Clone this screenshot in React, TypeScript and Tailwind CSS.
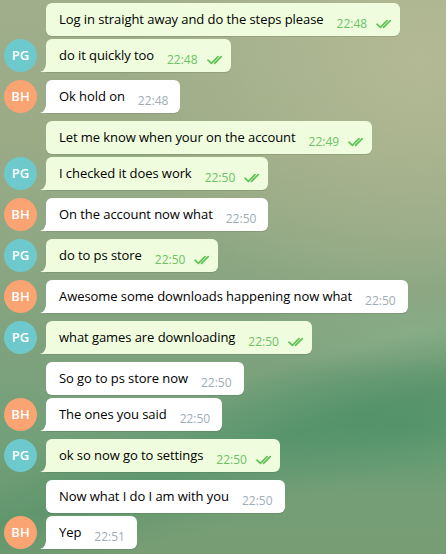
import React from "react";

type Msg = {
  text: string;
  time: string;
  out: boolean;
  who?: "PG" | "BH";
  last?: boolean;
};

const msgs: Msg[] = [
  { text: "Log in straight away and do the steps please", time: "22:48", out: true },
  { text: "do it quickly too", time: "22:48", out: true, who: "PG", last: true },
  { text: "Ok hold on", time: "22:48", out: false, who: "BH", last: true },
  { text: "Let me know when your on the account", time: "22:49", out: true },
  { text: "I checked it does work", time: "22:50", out: true, who: "PG", last: true },
  { text: "On the account now what", time: "22:50", out: false, who: "BH", last: true },
  { text: "do to ps store", time: "22:50", out: true, who: "PG", last: true },
  { text: "Awesome some downloads happening now what", time: "22:50", out: false, who: "BH", last: true },
  { text: "what games are downloading", time: "22:50", out: true, who: "PG", last: true },
  { text: "So go to ps store now", time: "22:50", out: false },
  { text: "The ones you said", time: "22:50", out: false, who: "BH", last: true },
  { text: "ok so now go to settings", time: "22:50", out: true, who: "PG", last: true },
  { text: "Now what I do I am with you", time: "22:50", out: false },
  { text: "Yep", time: "22:51", out: false, who: "BH", last: true },
];

function Checks() {
  return (
    <svg width="16" height="10" viewBox="0 0 16 10" className="block">
      <path
        d="M1 5.2 L4.4 8.3 L11 1.6 M7.6 8.3 L14.2 1.6"
        fill="none"
        stroke="#5fc354"
        strokeWidth="1.7"
        strokeLinecap="round"
        strokeLinejoin="round"
      />
    </svg>
  );
}

function Tail({ out }: { out: boolean }) {
  return (
    <svg
      width="8"
      height="11"
      viewBox="0 0 8 11"
      className="absolute bottom-0 left-[-6px] block"
    >
      <path d="M0 11 C3.5 10.2 6 7.5 6.3 0 L8 0 L8 11 Z" fill={out ? "#effdde" : "#ffffff"} />
    </svg>
  );
}

function Bubble({ m }: { m: Msg }) {
  return (
    <div className="flex items-end">
      <div className="w-[46px] shrink-0 pl-[4px]">
        {m.last && m.who ? (
          <div
            className={
              "flex h-[33px] w-[33px] items-center justify-center rounded-full text-[13px] font-semibold text-white " +
              (m.who === "PG" ? "bg-[#6ec9cc]" : "bg-[#f9a472]")
            }
          >
            {m.who}
          </div>
        ) : null}
      </div>
      <div
        className={
          "relative flex h-[33px] items-start pl-[13px] shadow-[0_1px_0_rgba(60,90,50,0.18)] " +
          (m.out ? "bg-[#effdde] pr-[8px] " : "bg-white pr-[12px] ") +
          (m.last ? "rounded-[6px] rounded-bl-none" : "rounded-[6px]")
        }
      >
        {m.last ? <Tail out={m.out} /> : null}
        <span className="whitespace-nowrap pt-[7px] text-[13px] leading-[18px] tracking-[-0.07px] text-black">
          {m.text}
        </span>
        <span
          className={
            "ml-[13px] whitespace-nowrap pt-[14px] text-[12px] leading-[14px] " +
            (m.out ? "text-[#6cc264]" : "text-[#a0acb6]")
          }
        >
          {m.time}
        </span>
        {m.out ? (
          <span className="ml-[9px] pt-[16px]">
            <Checks />
          </span>
        ) : null}
      </div>
    </div>
  );
}

export default function App() {
  return (
    <div
      className="relative h-[554px] w-[446px] overflow-hidden bg-[linear-gradient(163deg,transparent_66%,rgba(70,140,98,0.45)_76%,transparent_86%),radial-gradient(ellipse_220px_70px_at_400px_425px,rgba(72,145,100,0.6),transparent),radial-gradient(ellipse_200px_45px_at_430px_335px,rgba(150,190,150,0.4),transparent),radial-gradient(ellipse_300px_260px_at_420px_60px,rgba(182,186,150,0.9),transparent),linear-gradient(180deg,#a0ae8b_0%,#9aab86_25%,#8ea783_45%,#7fa27d_62%,#72a079_80%,#789d74_100%)]"
      style={{ fontFamily: '"Open Sans", "Noto Sans", sans-serif' }}
    >
      <div className="flex flex-col pt-[3px]">
        {msgs.map((m, i) => {
          const prev = msgs[i - 1];
          const gap = i === 0 ? "" : prev && prev.last ? "mt-[8px]" : "mt-[3px]";
          return (
            <div key={i} className={gap}>
              <Bubble m={m} />
            </div>
          );
        })}
      </div>
    </div>
  );
}
